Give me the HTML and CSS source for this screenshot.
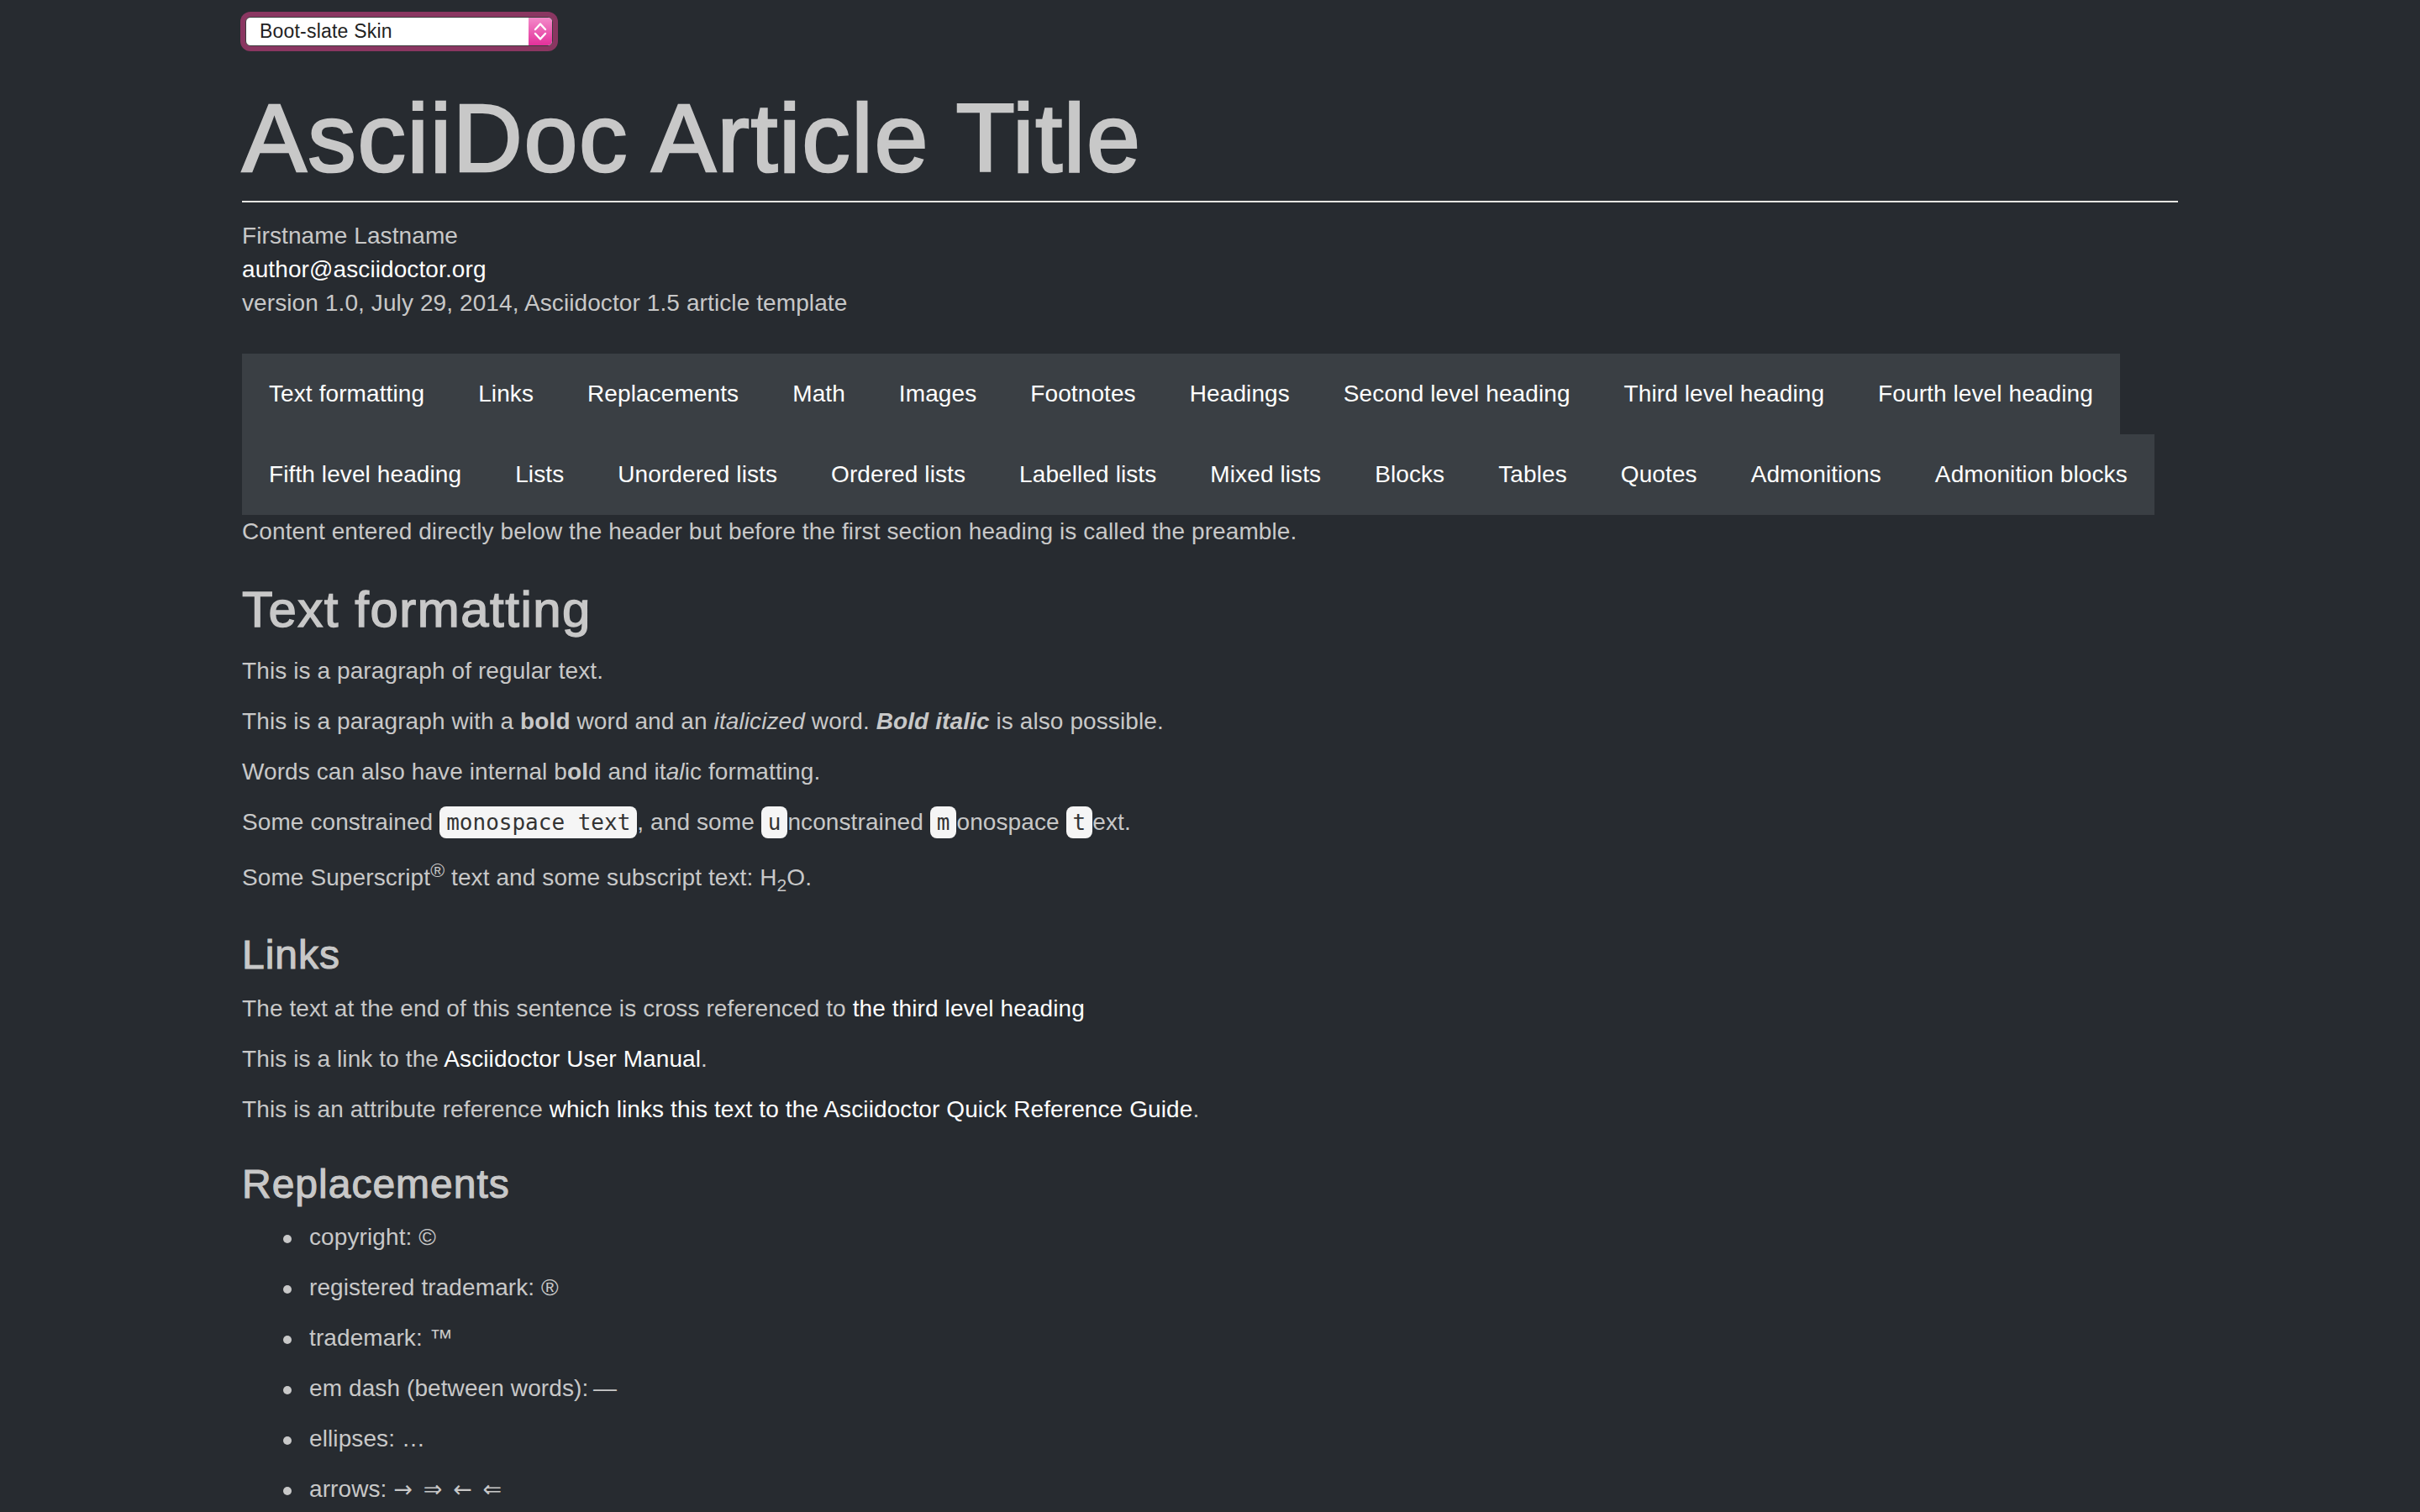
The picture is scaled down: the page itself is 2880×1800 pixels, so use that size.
FILE: index.html
```html
<!DOCTYPE html>
<html lang="en">
<head>
<meta charset="utf-8">
<title>AsciiDoc Article Title</title>
<link rel="stylesheet" href="styles.css">
</head>
<body>
<div class="page">
  <div class="skin-picker">
    <div class="skin-ring">
      <div class="skin-select">
        <span class="skin-label">Boot-slate Skin</span>
        <span class="skin-stepper">
          <svg class="stepper-icon" width="28" height="33" viewBox="0 0 28 33" aria-hidden="true">
            <path d="M8 14 L14 7.5 L20 14" fill="none" stroke="#fff" stroke-width="2.4" stroke-linecap="round" stroke-linejoin="round"/>
            <path d="M8 19 L14 25.5 L20 19" fill="none" stroke="#fff" stroke-width="2.4" stroke-linecap="round" stroke-linejoin="round"/>
          </svg>
        </span>
      </div>
    </div>
  </div>

  <header class="header">
    <h1 class="doc-title">AsciiDoc Article Title</h1>
    <div class="details">
      <div class="author">Firstname Lastname</div>
      <div class="email"><a class="link" href="#">author@asciidoctor.org</a></div>
      <div class="revision">version 1.0, July 29, 2014, Asciidoctor 1.5 article template</div>
    </div>
    <nav class="toc">
      <ul class="toc-list">
        <li class="toc-item"><a class="toc-link" href="#">Text formatting</a></li>
        <li class="toc-item"><a class="toc-link" href="#">Links</a></li>
        <li class="toc-item"><a class="toc-link" href="#">Replacements</a></li>
        <li class="toc-item"><a class="toc-link" href="#">Math</a></li>
        <li class="toc-item"><a class="toc-link" href="#">Images</a></li>
        <li class="toc-item"><a class="toc-link" href="#">Footnotes</a></li>
        <li class="toc-item"><a class="toc-link" href="#">Headings</a></li>
        <li class="toc-item"><a class="toc-link" href="#">Second level heading</a></li>
        <li class="toc-item"><a class="toc-link" href="#">Third level heading</a></li>
        <li class="toc-item"><a class="toc-link" href="#">Fourth level heading</a></li>
        <li class="toc-item"><a class="toc-link" href="#">Fifth level heading</a></li>
        <li class="toc-item"><a class="toc-link" href="#">Lists</a></li>
        <li class="toc-item"><a class="toc-link" href="#">Unordered lists</a></li>
        <li class="toc-item"><a class="toc-link" href="#">Ordered lists</a></li>
        <li class="toc-item"><a class="toc-link" href="#">Labelled lists</a></li>
        <li class="toc-item"><a class="toc-link" href="#">Mixed lists</a></li>
        <li class="toc-item"><a class="toc-link" href="#">Blocks</a></li>
        <li class="toc-item"><a class="toc-link" href="#">Tables</a></li>
        <li class="toc-item"><a class="toc-link" href="#">Quotes</a></li>
        <li class="toc-item"><a class="toc-link" href="#">Admonitions</a></li>
        <li class="toc-item"><a class="toc-link" href="#">Admonition blocks</a></li>
      </ul>
    </nav>
  </header>

  <main class="content">
    <p class="para">Content entered directly below the header but before the first section heading is called the preamble.</p>

    <section class="sect1">
      <h2 class="sect-title">Text formatting</h2>
      <p class="para">This is a paragraph of regular text.</p>
      <p class="para">This is a paragraph with a <strong>bold</strong> word and an <em>italicized</em> word. <strong><em>Bold italic</em></strong> is also possible.</p>
      <p class="para">Words can also have internal b<strong>ol</strong>d and it<em>al</em>ic formatting.</p>
      <p class="para">Some constrained <code class="mono">monospace text</code>, and some <code class="mono">u</code>nconstrained <code class="mono">m</code>onospace <code class="mono">t</code>ext.</p>
      <p class="para">Some Superscript<sup class="sup">®</sup> text and some subscript text: H<sub class="sub">2</sub>O.</p>

      <section class="sect2">
        <h3 class="subsect-title">Links</h3>
        <p class="para">The text at the end of this sentence is cross referenced to <a class="link" href="#">the third level heading</a></p>
        <p class="para">This is a link to the <a class="link" href="#">Asciidoctor User Manual</a>.</p>
        <p class="para">This is an attribute reference <a class="link" href="#">which links this text to the Asciidoctor Quick Reference Guide</a>.</p>
      </section>

      <section class="sect2">
        <h3 class="subsect-title">Replacements</h3>
        <ul class="bullets">
          <li class="bullet">copyright: ©</li>
          <li class="bullet">registered trademark: ®</li>
          <li class="bullet">trademark: ™</li>
          <li class="bullet">em dash (between words):&#8201;—</li>
          <li class="bullet">ellipses: …</li>
          <li class="bullet">arrows: <span class="arrows">→ ⇒ ← ⇐</span></li>
        </ul>
      </section>
    </section>
  </main>
</div>
</body>
</html>
```

FILE: styles.css
```css
html {
  background: #272b30;
}

body {
  margin: 0;
  background: #272b30;
  color: #c8c8c8;
  font-family: "Liberation Sans", Arial, Helvetica, sans-serif;
  font-size: 28px;
  line-height: 40px;
  letter-spacing: 0.1px;
}

.page {
  max-width: 2304px;
  margin: 0 auto;
  padding-top: 14px;
}

/* skin picker (native-looking select with focus ring) */
.skin-picker {
  display: flex;
}

.skin-ring {
  display: flex;
  margin-left: -2px;
  padding: 6px;
  background: #8a3661;
  border-radius: 12px;
}

.skin-select {
  display: flex;
  align-items: stretch;
  width: 364px;
  height: 33px;
  background: #ffffff;
  border: 1px solid #3c3c3c;
  border-radius: 6px;
  overflow: hidden;
}

.skin-label {
  flex: 1;
  padding-left: 16px;
  color: #222222;
  font-family: "Liberation Sans", Arial, sans-serif;
  font-size: 23px;
  line-height: 33px;
  letter-spacing: 0.2px;
}

.skin-stepper {
  display: flex;
  width: 28px;
  background: linear-gradient(#f38ac9, #e3309a);
}

.stepper-icon {
  display: block;
}

/* header */
.doc-title {
  margin: 40px 0 0;
  padding-bottom: 11px;
  border-bottom: 2px solid #e6e6e2;
  color: #c8c8c8;
  font-size: 115px;
  font-weight: 400;
  line-height: 1.1;
  letter-spacing: 1.6px;
  -webkit-text-stroke: 2.6px #c8c8c8;
}

.details {
  margin-top: 20px;
}

.link {
  color: #ffffff;
  text-decoration: none;
}

.toc {
  margin-top: 40px;
}

.toc-list {
  display: flex;
  flex-wrap: wrap;
  margin: 0;
  padding: 0;
  list-style: none;
}

.toc-item {
  background: #3a3f44;
}

.toc-link {
  display: block;
  padding: 28px 32px;
  color: #ffffff;
  text-decoration: none;
  line-height: 40px;
}

/* content */
.para {
  margin: 0 0 20px;
}

.sect-title {
  margin: 40px 0 20px;
  color: #c8c8c8;
  font-size: 60px;
  font-weight: 400;
  line-height: 1.1;
  letter-spacing: 1.5px;
  -webkit-text-stroke: 1.4px #c8c8c8;
}

.subsect-title {
  margin: 43px 0 17px;
  color: #c8c8c8;
  font-size: 48px;
  font-weight: 400;
  line-height: 1.1;
  letter-spacing: 1px;
  -webkit-text-stroke: 1.1px #c8c8c8;
}

.mono {
  padding: 4px 8px;
  background: #f5f5f5;
  color: #333333;
  border-radius: 8px;
  font-family: "DejaVu Sans Mono", "Liberation Mono", monospace;
  font-size: 26px;
  letter-spacing: 0;
}

.sup {
  font-size: 82%;
  vertical-align: super;
  line-height: 1.5;
}

.sub {
  font-size: 75%;
  vertical-align: sub;
  line-height: 1.35;
}

.bullets {
  margin: 0;
  padding-left: 80px;
  list-style: none;
}

.bullet {
  margin-bottom: 20px;
}

.bullet::before {
  content: "";
  display: inline-block;
  width: 10px;
  height: 10px;
  margin-left: -31px;
  margin-right: 21px;
  border-radius: 50%;
  background: #c8c8c8;
  vertical-align: middle;
}

.bullet:last-child {
  margin-bottom: 0;
}

.arrows {
  font-family: "DejaVu Sans", "Liberation Sans", sans-serif;
  font-size: 27px;
  line-height: 0;
  word-spacing: 4px;
}
```
